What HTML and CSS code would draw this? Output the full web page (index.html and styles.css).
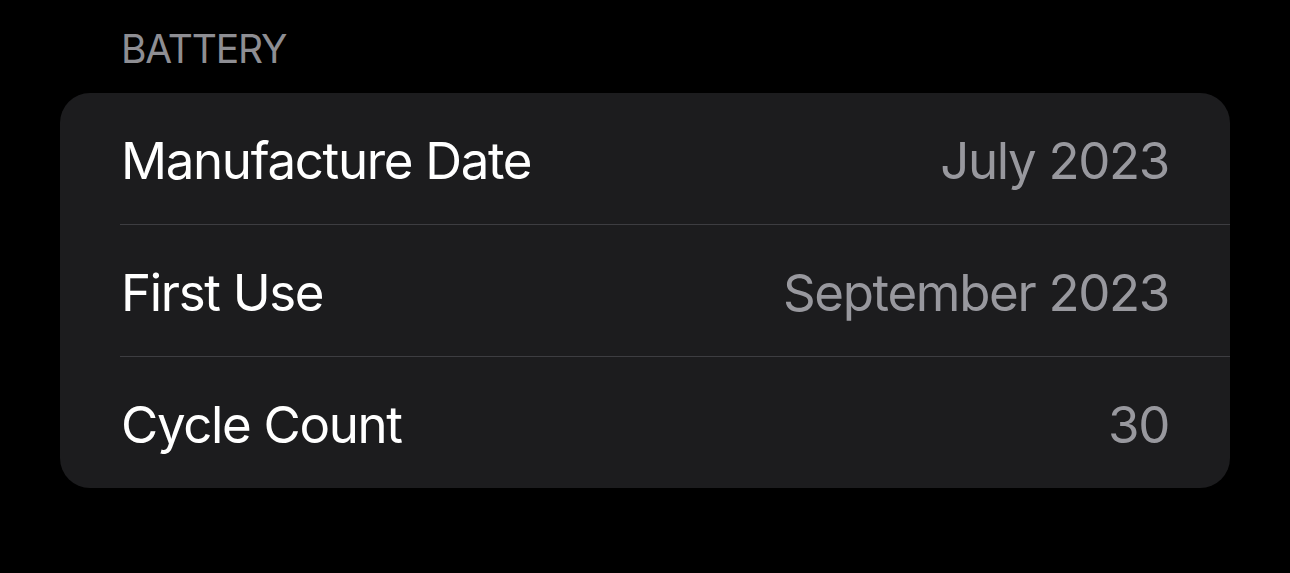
FILE: index.html
```html
<!DOCTYPE html>
<html lang="en">
<head>
  <meta charset="UTF-8" />
  <meta name="viewport" content="width=device-width, initial-scale=1.0" />
  <title>Battery</title>
  <link rel="stylesheet" href="styles.css">
</head>
<body>

  <section class="group">
    <h2 class="group-title">BATTERY</h2>

    <div class="card">
      <div class="row">
        <span class="row-label">Manufacture Date</span>
        <span class="row-value">July 2023</span>
      </div>
      <div class="row">
        <span class="row-label">First Use</span>
        <span class="row-value">September 2023</span>
      </div>
      <div class="row">
        <span class="row-label">Cycle Count</span>
        <span class="row-value">30</span>
      </div>
    </div>
  </section>

</body>
</html>
```

FILE: styles.css
```css
body {
  margin: 0;
  background-color: #000;
  font-family: 'Inter', 'Noto Sans', sans-serif;
  color: #fff;
}
.group {
  padding: 25px 60px 0;
}
.group-title {
  margin: 0 0 20px;
  padding-left: 61px;
  font-size: 39px;
  line-height: 48px;
  font-weight: 400;
  letter-spacing: -0.03em;
  color: #8e8e93;
}
.card {
  background-color: #1c1c1e;
  border-radius: 30px;
  overflow: hidden;
}
.row {
  display: flex;
  justify-content: space-between;
  align-items: center;
  height: 131px;
  box-sizing: border-box;
  padding: 4px 61px 0 61px;
  font-size: 51px;
  line-height: 62px;
  letter-spacing: -0.026em;
}
.row + .row {
  height: 132px;
  border-top: 1px solid #3d3d41;
  margin-left: 60px;
  padding-left: 1px;
}
.row-label {
  color: #fff;
}
.row-value {
  color: #98989e;
}
```
